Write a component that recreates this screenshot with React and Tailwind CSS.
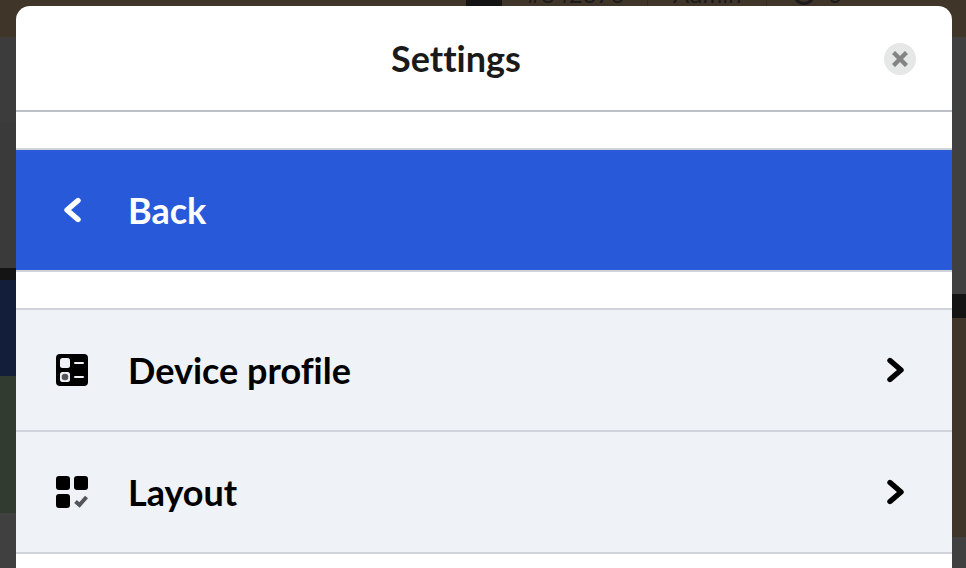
import React from "react";

const ProfileIcon = () => (
  <svg width="32" height="32" viewBox="0 0 32 32">
    <rect width="32" height="32" rx="4" fill="#000" />
    <rect x="4" y="4" width="10" height="10" rx="2.5" fill="#eff2f7" />
    <rect x="4" y="18" width="10" height="10" rx="2.5" fill="#eff2f7" />
    <circle cx="9" cy="23" r="3.3" fill="#55565c" />
    <rect x="18" y="8" width="10" height="2" rx="1" fill="#eff2f7" />
    <rect x="18" y="22" width="10" height="2" rx="1" fill="#eff2f7" />
  </svg>
);

const LayoutIcon = () => (
  <svg width="32" height="32" viewBox="0 0 32 32">
    <rect width="14" height="14" rx="3" fill="#000" />
    <rect x="18" width="14" height="14" rx="3" fill="#000" />
    <rect y="18" width="14" height="14" rx="3" fill="#000" />
    <path d="M19.5 25.5l4 3.5 7-8" fill="none" stroke="#55565c" strokeWidth="4" />
  </svg>
);

const Chevron = ({ flip }) => (
  <svg width="18" height="26" viewBox="0 0 18 26" className={flip ? "rotate-180" : ""}>
    <path
      d="M3 3.5L14 13L3 22.5"
      fill="none"
      stroke="currentColor"
      strokeWidth="5.4"
      strokeLinecap="round"
      strokeLinejoin="round"
    />
  </svg>
);

const rows = [
  { label: "Device profile", icon: <ProfileIcon /> },
  { label: "Layout", icon: <LayoutIcon /> },
];

export default function App() {
  return (
    <div className="relative h-[568px] w-[966px] overflow-hidden bg-[#403529] font-['Lato','Open_Sans',sans-serif] [font-variant-ligatures:none]">
      {/* dimmed page behind the modal */}
      <div className="flex h-full">
        <div className="flex w-4 flex-col">
          <div className="h-[37px] bg-[#403529]" />
          <div className="h-[85px] bg-[#3c3c3c]" />
          <div className="h-[146px] bg-[#3a3a3a]" />
          <div className="h-3 bg-[#141414]" />
          <div className="h-24 bg-[#121e3a]" />
          <div className="h-[137px] bg-[#323b2f]" />
          <div className="flex-1 bg-[#404040]" />
        </div>

        <div className="flex h-[6px] flex-1 items-start overflow-hidden pl-[450px] text-[24px] leading-[24px] text-[#1c1a1c]">
          <div className="h-[6px] w-9 bg-[#141414]" />
          <span className="-mt-[18px] ml-[25px] w-[121px] border-r border-[#352c22]">#342370</span>
          <span className="-mt-[18px] ml-[25px] w-[94px] border-r border-[#352c22]">Admin</span>
          <div className="-mt-[17px] ml-[26px] h-[22px] w-[22px] rounded-full border-[3px] border-[#1c1a1c]" />
          <span className="-mt-[18px] ml-[13px]">0</span>
        </div>

        <div className="flex w-[14px] flex-col">
          <div className="h-[37px] bg-[#403529]" />
          <div className="h-[257px] bg-[#404040]" />
          <div className="h-6 bg-[#141414]" />
          <div className="h-[219px] bg-[#403529]" />
          <div className="flex-1 bg-[#404040]" />
        </div>
      </div>

      {/* modal */}
      <div className="absolute left-4 top-1.5 h-[580px] w-[936px] rounded-t-[14px] bg-white">
        <div className="relative flex h-[106px] items-center justify-center border-b-2 border-[#bcc0c4] pr-14">
          <h1 className="text-[36px] font-bold text-[#1a1a1a]">Settings</h1>
          <button className="absolute right-9 top-[37px] flex h-8 w-8 items-center justify-center rounded-full bg-[#e6e7e7]">
            <svg width="16" height="16" viewBox="0 0 16 16">
              <path d="M1.5 1.5l13 13M14.5 1.5l-13 13" stroke="#848484" strokeWidth="4.4" />
            </svg>
          </button>
        </div>

        <div className="mt-9 flex h-[124px] items-center border-y-2 border-[#d0d4da] bg-[#2859d9] text-white">
          <div className="flex w-28 justify-center">
            <Chevron flip />
          </div>
          <span className="text-[36px] font-bold">Back</span>
        </div>

        <div className="mt-9 border-t-2 border-[#d0d4da]">
          {rows.map((row) => (
            <div
              key={row.label}
              className="flex h-[122px] items-center border-b-2 border-[#d0d4da] bg-[#eff2f7] text-black"
            >
              <div className="flex w-28 justify-center">{row.icon}</div>
              <span className="flex-1 text-[36px] font-bold">{row.label}</span>
              <div className="mr-[47px]">
                <Chevron />
              </div>
            </div>
          ))}
        </div>
      </div>
    </div>
  );
}
